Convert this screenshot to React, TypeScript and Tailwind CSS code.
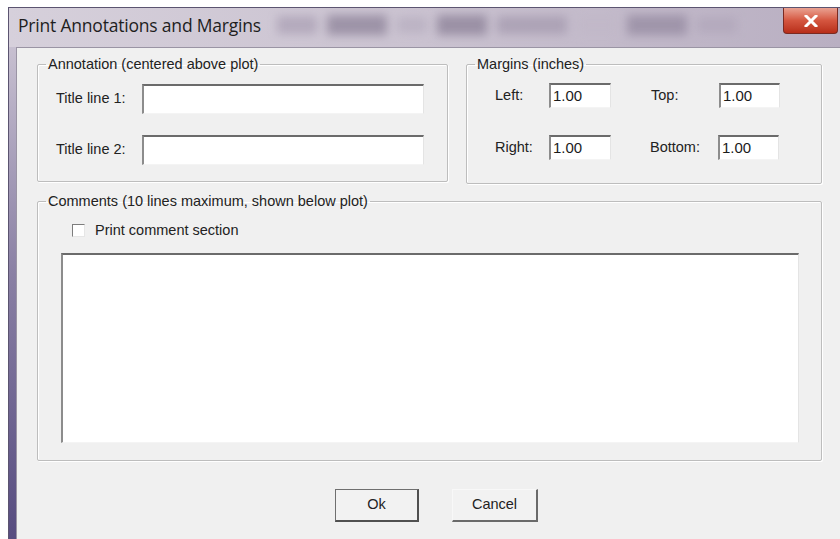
import React from "react";

// Sunken edit box in the classic Windows style
const Edit = ({ value = "", className = "" }: { value?: string; className?: string }) => (
  <div
    className={`bg-white border-t-2 border-l-2 border-r border-b border-t-[#6b6b6b] border-l-[#8c8c8c] border-r-[#e4e4e4] border-b-[#f4f4f4] flex items-center pl-[2px] text-[15px] text-[#1b1b1b] ${className}`}
  >
    {value}
  </div>
);

const Group = ({
  legend,
  className = "",
  children,
}: {
  legend: string;
  className?: string;
  children: React.ReactNode;
}) => (
  <fieldset className={`border border-[#bdbdbd] rounded-[2px] shadow-[inset_1px_1px_0_#fff,1px_1px_0_#fff] ${className}`}>
    <legend className="ml-[8px] px-[2px] leading-[16px] text-[#222]">{legend}</legend>
    {children}
  </fieldset>
);

const App = () => {
  return (
    <div className="w-[840px] h-[539px] bg-white pt-[7px] overflow-hidden font-['Liberation_Sans',Arial,sans-serif]">
      {/* window frame */}
      <div className="ml-[8px] h-[532px] flex flex-col border-l border-t border-[#5b5470] bg-gradient-to-b from-[#d2cbd8] via-[#8a80a4] to-[#574c80] pl-[7px]">
        {/* title bar */}
        <div className="h-[39px] flex items-start bg-gradient-to-r from-[#d6d0db] via-[#cac2d0] to-[#b9afc2] -ml-[7px] pl-[9px]">
          <span className="mt-[6px] text-[17.5px] leading-[22px] text-[#1e1e1e] font-['Open_Sans',sans-serif] tracking-[-0.2px]">
            Print Annotations and Margins
          </span>
          {/* blurred glass behind the caption */}
          <div className="flex-1 h-[30px] mt-[2px] ml-[16px] flex items-center gap-[10px] blur-[5px] opacity-70">
            <div className="w-[40px] h-[18px] bg-[#a99eb3]" />
            <div className="w-[60px] h-[20px] bg-[#8a7f96]" />
            <div className="w-[30px] h-[16px] bg-[#b6adbf]" />
            <div className="w-[50px] h-[20px] bg-[#887d94]" />
            <div className="w-[70px] h-[18px] bg-[#a398ad]" />
            <div className="w-[40px] h-[18px] bg-[#c1b8c8]" />
            <div className="w-[60px] h-[20px] bg-[#92879e]" />
            <div className="w-[40px] h-[16px] bg-[#b0a6ba]" />
          </div>
          <div className="w-[55px] h-[26px] mr-[2px] rounded-b-[4px] border border-t-0 border-[#7a2a22] bg-gradient-to-b from-[#e9a192] via-[#d4553f] to-[#b82d18] flex items-center justify-center">
            <svg width="14" height="12" viewBox="0 0 14 12">
              <path d="M2 1 L12 11 M12 1 L2 11" stroke="#fff" strokeWidth="3" strokeLinecap="square" />
            </svg>
          </div>
        </div>

        {/* client area */}
        <div className="flex-1 bg-[#f0f0f0] border-t border-l border-[#9a94a4] text-[14.5px] text-[#222]">
          <div className="flex gap-[18px] pl-[20px] pt-[8px]">
            <Group legend="Annotation (centered above plot)" className="w-[411px] h-[126px]">
              <div className="flex flex-col gap-[21px] pt-[12px] pl-[18px]">
                <div className="flex items-center">
                  <span className="w-[86px]">Title line 1:</span>
                  <Edit className="w-[282px] h-[30px]" />
                </div>
                <div className="flex items-center">
                  <span className="w-[86px]">Title line 2:</span>
                  <Edit className="w-[282px] h-[30px]" />
                </div>
              </div>
            </Group>
            <Group legend="Margins (inches)" className="w-[356px] h-[128px]">
              <div className="flex flex-col gap-[27px] pt-[11px] pl-[28px]">
                <div className="flex items-center">
                  <span className="w-[54px]">Left:</span>
                  <Edit value="1.00" className="w-[62px] h-[25px]" />
                  <span className="w-[68px] ml-[40px]">Top:</span>
                  <Edit value="1.00" className="w-[61px] h-[25px]" />
                </div>
                <div className="flex items-center">
                  <span className="w-[54px]">Right:</span>
                  <Edit value="1.00" className="w-[62px] h-[25px]" />
                  <span className="w-[68px] ml-[39px]">Bottom:</span>
                  <Edit value="1.00" className="w-[61px] h-[25px]" />
                </div>
              </div>
            </Group>
          </div>

          <div className="pl-[20px] pt-[9px]">
            <Group legend="Comments (10 lines maximum, shown below plot)" className="w-[785px] h-[268px]">
              <div className="pl-[34px] pt-[11px] flex items-center">
                <span className="w-[13px] h-[13px] bg-white border-t border-l border-[#7d7d7d] border-r border-b border-r-[#e6e6e6] border-b-[#e6e6e6]" />
                <span className="ml-[10px]">Print comment section</span>
              </div>
              <div className="pl-[23px] pt-[11px]">
                <Edit className="w-[738px] h-[190px]" />
              </div>
            </Group>
          </div>

          <div className="flex gap-[33px] pl-[318px] pt-[28px]">
            <button className="w-[84px] h-[33px] bg-[#f2f2f2] border border-[#6f6f6f] border-r-2 border-b-2 border-r-[#505050] border-b-[#505050] text-[14.5px] text-[#222]">
              Ok
            </button>
            <button className="w-[86px] h-[33px] bg-[#f2f2f2] border-t border-l border-[#f8f8f8] border-r-2 border-b-2 border-r-[#6a6a6a] border-b-[#6a6a6a] text-[14.5px] text-[#222]">
              Cancel
            </button>
          </div>
        </div>
      </div>
    </div>
  );
};

export default App;
